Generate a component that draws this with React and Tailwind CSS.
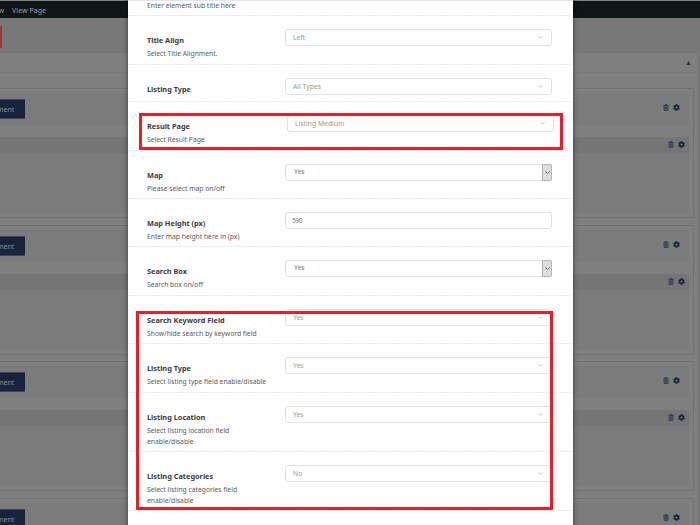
import React from "react";
import { FaCog } from "react-icons/fa";

function TrashIcon() {
  return (
    <svg viewBox="0 0 12 14" className="h-[7px] w-[6px]" fill="#5a6070" stroke="#343d55" strokeWidth="1.7">
      <path d="M0.5 3H11.5M4 3V1H8V3M2 3V13H10V3M4.7 5V11M7.3 5V11" />
    </svg>
  );
}

function Actions() {
  return (
    <div className="flex items-center gap-[4px]">
      <TrashIcon />
      <FaCog className="h-[7px] w-[7px] text-[#17233d]" />
    </div>
  );
}

function Section({ className }) {
  return (
    <section className={`mr-[4px] h-[130px] shrink-0 border-y border-r border-[#737373] pt-[4px] pr-[4px] ${className}`}>
      <div className="flex h-[32px] items-start justify-between bg-[#7b7b7b] pt-[6px] pr-[9px]">
        <div className="flex h-[20px] w-[25px] items-center border-y border-[#3a435a] bg-[#18223a] text-[7px] text-[#878b95]">
          <span className="-ml-[3px] pt-[2px]">ment</span>
        </div>
        <div className="pt-[5px]">
          <Actions />
        </div>
      </div>
      <div className="mt-[12px] flex h-[16px] items-start justify-end bg-[#757575] pt-[4px] pr-[4px]">
        <Actions />
      </div>
      <div className="h-[60px] bg-[#7b7b7b]" />
    </section>
  );
}

function Chevron({ className }) {
  return (
    <svg viewBox="0 0 5 3" className={`h-[3px] w-[5px] ${className}`} fill="none" stroke="currentColor" strokeWidth="1">
      <path d="M0.4 0.4L2.5 2.3L4.6 0.4" />
    </svg>
  );
}

function Field({ kind, value }) {
  if (kind === "native") {
    return (
      <div className="flex h-[17px] w-[267px] items-stretch justify-between rounded-[3px] border border-[#e2e2e2] bg-white pl-[8px] text-[6.8px] text-[#777]">
        <span className="self-center">{value}</span>
        <span className="-my-px -mr-px flex w-[10px] items-center justify-center rounded-r-[2px] border border-[#b5b5b5] bg-[#dedede]">
          <Chevron className="text-[#666]" />
        </span>
      </div>
    );
  }
  if (kind === "input") {
    return (
      <div className="flex h-[17px] w-[267px] items-center rounded-[3px] border border-[#e2e2e2] bg-white pl-[6px] text-[6.5px] tracking-[-0.4px] text-[#777]">
        <span className="pt-[1px]">{value}</span>
      </div>
    );
  }
  return (
    <div className="flex h-[17px] w-[267px] items-center justify-between rounded-[3px] border border-[#e2e2e2] bg-white pr-[8px] pl-[7px] text-[6.8px] text-[#999]">
      <span className="pt-[2px]">{value}</span>
      <Chevron className="text-[#c4c4c4]" />
    </div>
  );
}

const rows = [
  { title: "Title Align", desc: "Select Title Alignment.", kind: "select", value: "Left", h: "h-[49px]" },
  { title: "Listing Type", kind: "select", value: "All Types", h: "h-[37px]" },
  { title: "Result Page", desc: "Select Result Page", kind: "select", value: "Listing Medium", h: "h-[49px]", shift: "pl-[2px]" },
  { title: "Map", desc: "Please select map on/off", kind: "native", value: "Yes", h: "h-[48px]" },
  { title: "Map Height (px)", desc: "Enter map height here in (px)", kind: "input", value: "590", h: "h-[48px]" },
  { title: "Search Box", desc: "Search box on/off", kind: "native", value: "Yes", h: "h-[49px]" },
  { title: "Search Keyword Field", desc: "Show/hide search by keyword field", kind: "select", value: "Yes", h: "h-[48px]" },
  { title: "Listing Type", desc: "Select listing type field enable/disable", kind: "select", value: "Yes", h: "h-[49px]" },
  { title: "Listing Location", desc: "Select listing location field enable/disable", kind: "select", value: "Yes", h: "h-[59px]" },
  { title: "Listing Categories", desc: "Select listing categories field enable/disable", kind: "select", value: "No", h: "h-[59px]" },
];

function Divider() {
  return (
    <div className="h-px w-full shrink-0 bg-[repeating-linear-gradient(90deg,#ececec_0_2px,#fafafa_2px_3px)]" />
  );
}

function Row({ row }) {
  return (
    <div className={`flex shrink-0 flex-col ${row.h}`}>
      <div className="flex min-h-0 flex-1 pl-[19px]">
        <div className="w-[138px] shrink-0 pt-[19px]">
          <div className="h-[11px] text-[7.35px] leading-[11px] font-bold whitespace-nowrap text-[#3c3c3c]">{row.title}</div>
          {row.desc && (
            <div className="mt-[2px] w-[124px] text-[6.75px] leading-[11px] text-[#5c5c5c]">{row.desc}</div>
          )}
        </div>
        <div className={`pt-[13px] ${row.shift ?? ""}`}>
          <Field kind={row.kind} value={row.value} />
        </div>
      </div>
      <Divider />
    </div>
  );
}

export default function App() {
  return (
    <div className="relative h-[525px] w-[700px] overflow-hidden bg-[#787878] font-['Noto_Sans',sans-serif]">
      <div className="flex h-full flex-col">
        <div className="flex h-[18px] shrink-0 items-center border-t border-[#7c8181] bg-[#101517] pt-[2px] text-[7.1px] whitespace-nowrap text-[#9a9c9d]">
          <span className="-ml-[1.5px]">w</span>
          <span className="pl-[8px]">View Page</span>
        </div>
        <div className="flex h-[35px] shrink-0 items-start pt-[8px]">
          <div className="h-[22px] w-[2px] bg-[#9b3a3a]" />
        </div>
        <div className="mr-[2px] flex min-h-0 flex-1 flex-col overflow-hidden bg-[#7f7f7f]">
          <div className="flex h-[20px] shrink-0 items-center justify-end border-b border-[#797979] pr-[7px]">
            <svg viewBox="0 0 4 4" className="h-[4px] w-[5px]">
              <path d="M0 4L2 0L4 4Z" fill="#262e40" />
            </svg>
          </div>
          <Section className="mt-[15px]" />
          <Section className="mt-[7px]" />
          <Section className="mt-[6px]" />
          <Section className="mt-[7px]" />
        </div>
      </div>

      <div className="absolute top-0 left-[128px] flex h-[525px] w-[445px] flex-col overflow-hidden border-t border-[#e4e4e4] bg-[#fefefe]">
        <div className="h-[14px] shrink-0 pl-[19px] text-[6.75px] leading-[9px] text-[#5c5c5c]">Enter element sub title here</div>
        <Divider />
        {rows.map((row, i) => (
          <Row key={i} row={row} />
        ))}
      </div>
      <div className="pointer-events-none absolute -top-[8px] left-[128px] h-[550px] w-[445px] shadow-[0_0_5px_rgba(0,0,0,0.55)]" />

      <div className="absolute top-[113px] left-[139px] h-[37px] w-[424px] border-[3px] border-[#ee1c25]" />
      <div className="absolute top-[311px] left-[136px] h-[199px] w-[417px] border-[3px] border-[#ee1c25]" />
    </div>
  );
}
